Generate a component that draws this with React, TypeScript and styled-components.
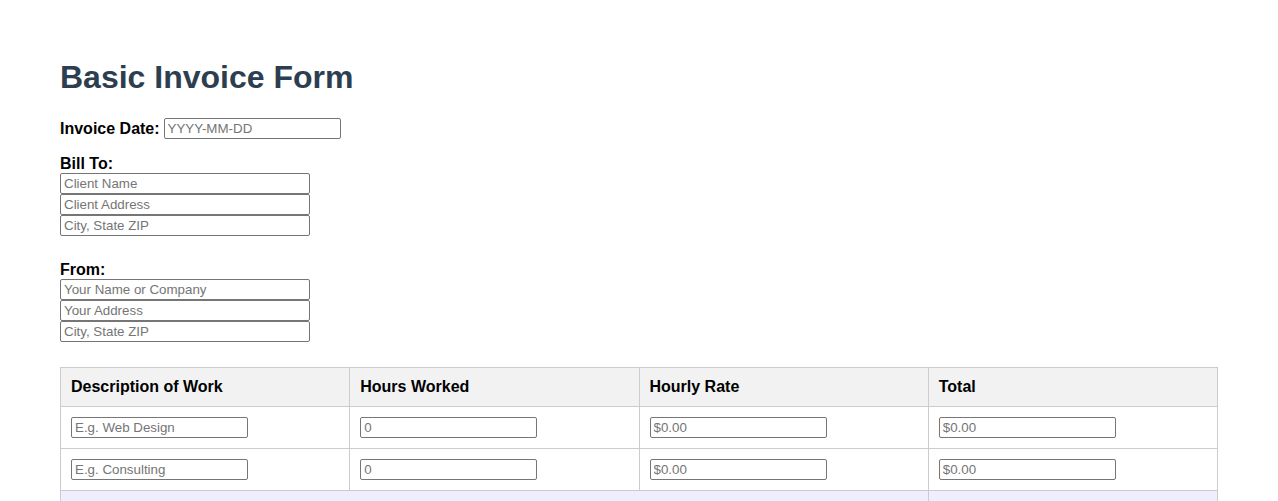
import React from 'react';
import styled, { createGlobalStyle } from 'styled-components';

const GlobalStyle = createGlobalStyle`
    body {
        margin: 0;
        background: #ffffff;
        font-family: "Liberation Sans", Arial, sans-serif;
        color: #000000;
    }
`;

const Page = styled.div`
    padding: 38px 60px 40px;
`;

const Title = styled.h1`
    font-size: 32px;
    font-weight: bold;
    color: #2c3e50;
    margin: 21px 0 22px;
`;

const Field = styled.input`
    font-family: "Liberation Sans", Arial, sans-serif;
    font-size: 13.33px;
    height: 21px;
    width: ${(p: { $w?: number }) => (p.$w ? `${p.$w}px` : '177px')};
    box-sizing: border-box;
    padding: 1px 3px;
    border: 1px solid #767676;
    border-radius: 2px;
    background: #ffffff;
    color: #000000;
    &::placeholder {
        color: #757575;
    }
`;

const StackField = styled(Field)`
    display: block;
`;

const DateRow = styled.div`
    display: flex;
    align-items: center;
    gap: 4px;
    margin-bottom: 16px;
`;

const Label = styled.label`
    font-size: 16px;
    font-weight: bold;
`;

const BlockLabel = styled(Label)`
    display: block;
`;

const Section = styled.div`
    margin-bottom: 25px;
`;

const Table = styled.table`
    width: 100%;
    border-collapse: collapse;
    table-layout: fixed;
    font-size: 16px;
`;

const Th = styled.th`
    background: #f2f2f2;
    border: 1px solid #cccccc;
    padding: 10px;
    text-align: left;
    font-weight: bold;
`;

const Td = styled.td`
    border: 1px solid #cccccc;
    padding: 10px;
    text-align: left;
    vertical-align: middle;
    line-height: 0;
`;

const TotalRow = styled.tr`
    background: #eeeeff;
`;

const TotalLabel = styled(Td)`
    text-align: right;
    font-weight: bold;
    line-height: normal;
`;

const rows = [
    { desc: 'E.g. Web Design' },
    { desc: 'E.g. Consulting' },
];

export default function App() {
    return (
        <>
            <GlobalStyle />
            <Page>
                <Title>Basic Invoice Form</Title>
                <DateRow>
                    <Label>Invoice Date:</Label>
                    <Field placeholder="YYYY-MM-DD" />
                </DateRow>
                <Section>
                    <BlockLabel>Bill To:</BlockLabel>
                    <StackField $w={250} placeholder="Client Name" />
                    <StackField $w={250} placeholder="Client Address" />
                    <StackField $w={250} placeholder="City, State ZIP" />
                </Section>
                <Section>
                    <BlockLabel>From:</BlockLabel>
                    <StackField $w={250} placeholder="Your Name or Company" />
                    <StackField $w={250} placeholder="Your Address" />
                    <StackField $w={250} placeholder="City, State ZIP" />
                </Section>
                <Table>
                    <thead>
                        <tr>
                            <Th>Description of Work</Th>
                            <Th>Hours Worked</Th>
                            <Th>Hourly Rate</Th>
                            <Th>Total</Th>
                        </tr>
                    </thead>
                    <tbody>
                        {rows.map((r) => (
                            <tr key={r.desc}>
                                <Td><Field placeholder={r.desc} /></Td>
                                <Td><Field placeholder="0" /></Td>
                                <Td><Field placeholder="$0.00" /></Td>
                                <Td><Field placeholder="$0.00" readOnly /></Td>
                            </tr>
                        ))}
                        <TotalRow>
                            <TotalLabel colSpan={3}>Grand Total:</TotalLabel>
                            <Td><Field placeholder="$0.00" readOnly /></Td>
                        </TotalRow>
                    </tbody>
                </Table>
            </Page>
        </>
    );
}
